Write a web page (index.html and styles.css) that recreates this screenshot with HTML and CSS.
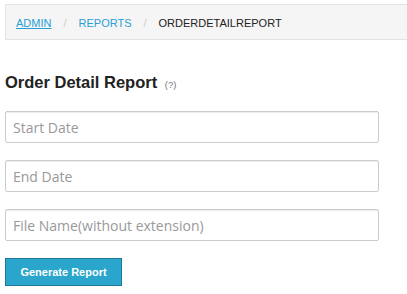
FILE: index.html
```html
<!DOCTYPE html>
<html lang="en">
<head>
    <meta charset="UTF-8">
    <meta name="viewport" content="width=device-width, initial-scale=1.0">
    <title>Order Detail Report</title>
    <link rel="stylesheet" href="styles.css">
</head>
<body>

<ul class="breadcrumb">
    <li><a href="#">Admin</a></li>
    <li class="sep">/</li>
    <li><a href="#" class="plain">Reports</a></li>
    <li class="sep">/</li>
    <li class="active">OrderDetailReport</li>
</ul>

<h2 class="title">Order Detail Report <small class="help">(?)</small></h2>

<form id="reportForm">
    <input type="text" class="field" placeholder="Start Date">
    <input type="text" class="field" placeholder="End Date">
    <input type="text" class="field" placeholder="File Name(without extension)">
    <button type="button" class="btnGenerate">Generate Report</button>
</form>

</body>
</html>
```

FILE: styles.css
```css
body {
    font-family: "Liberation Sans", Arial, sans-serif;
    margin: 0;
    padding: 4px 0 0 5px;
    width: 420px;
}
.breadcrumb {
    list-style: none;
    margin: 0;
    padding: 1px 10px 0;
    height: 33px;
    display: flex;
    align-items: center;
    background-color: #f5f5f5;
    border: 1px solid #e3e3e3;
    font-size: 11px;
    text-transform: uppercase;
    color: #222;
}
.breadcrumb a {
    color: #2a9fd6;
}
.breadcrumb a.plain {
    text-decoration: none;
}
.breadcrumb .sep {
    color: #ccc;
    padding: 0 12px 0 12px;
}
.title {
    font-size: 16.5px;
    font-weight: bold;
    color: #222;
    margin: 32px 0 0;
    line-height: 20px;
}
.help {
    font-size: 9.5px;
    font-weight: normal;
    color: #777;
    margin-left: 3px;
}
#reportForm {
    display: flex;
    flex-direction: column;
    align-items: flex-start;
    margin-top: 16px;
}
.field {
    width: 374px;
    height: 32px;
    box-sizing: border-box;
    margin: 0 0 17px;
    padding: 0 7px;
    border: 1px solid #ccc;
    border-radius: 2px;
    box-shadow: inset 0 1px 1px rgba(0, 0, 0, 0.075);
    font-family: "Open Sans", sans-serif;
    font-size: 14px;
    color: #555;
}
.field::placeholder {
    color: #999;
}
.btnGenerate {
    margin-top: 0;
    width: 117px;
    height: 28px;
    background-color: #2aa6cc;
    color: white;
    border: 1px solid #1e7a99;
    border-radius: 0;
    font-family: "Liberation Sans", Arial, sans-serif;
    font-size: 11px;
    font-weight: bold;
    cursor: pointer;
}
```
